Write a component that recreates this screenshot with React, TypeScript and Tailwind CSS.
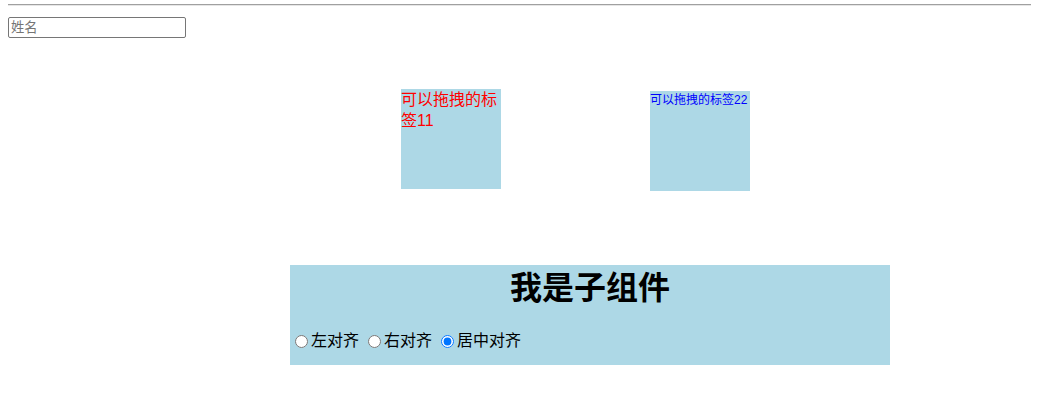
import React, { useState } from 'react';

const AlignChild: React.FC = () => {
  const [align, setAlign] = useState<string>('center');

  const options = [
    { value: 'left', label: '左对齐' },
    { value: 'right', label: '右对齐' },
    { value: 'center', label: '居中对齐' },
  ];

  return (
    <div className="ml-[290px] mt-[74px] w-[600px] h-[100px] bg-[#add8e6]">
      <h1 className="text-[32px] leading-[46px] font-bold text-center text-black">我是子组件</h1>
      <div className="mt-[20px] flex items-center h-[20px] text-[16px] leading-[20px] text-black">
        {options.map(o => (
          <label key={o.value} className="flex items-center mr-[4px]">
            <input
              type="radio"
              name="align"
              value={o.value}
              checked={align === o.value}
              onChange={() => setAlign(o.value)}
              className="w-[13px] h-[13px] ml-[5px] mr-[3px] accent-[#0075ff]"
            />
            {o.label}
          </label>
        ))}
      </div>
    </div>
  );
};

const App: React.FC = () => {
  const [name, setName] = useState<string>('');

  return (
    <div
      className="min-h-screen bg-white"
      style={{ fontFamily: '"Liberation Sans", "Noto Sans CJK SC", sans-serif' }}
    >
      {/* top rule */}
      <div className="px-2 pt-[4px]">
        <div className="h-[2px] border-t border-[#a0a0a0] border-b border-b-[#e6e6e6]" />
      </div>

      <input
        type="text"
        placeholder="姓名"
        value={name}
        onChange={e => setName(e.target.value)}
        className="block ml-2 mt-[11px] w-[178px] h-[21px] border border-[#767676] rounded-[2px] px-[2px] text-[13.33px] leading-[17px] placeholder:text-[#757575] outline-none"
      />

      {/* draggable labels */}
      <div className="flex items-start mt-[51px]">
        <div className="ml-[401px] w-[100px] h-[100px] bg-[#add8e6] text-[16px] leading-[21px] text-[#ff0000] cursor-move">
          可以拖拽的标签11
        </div>
        <div className="ml-[149px] mt-[2px] w-[100px] h-[100px] bg-[#add8e6] text-[12px] leading-[17px] pt-[1px] text-[#0000ff] whitespace-nowrap cursor-move">
          可以拖拽的标签22
        </div>
      </div>

      <AlignChild />
    </div>
  );
};

export default App;
